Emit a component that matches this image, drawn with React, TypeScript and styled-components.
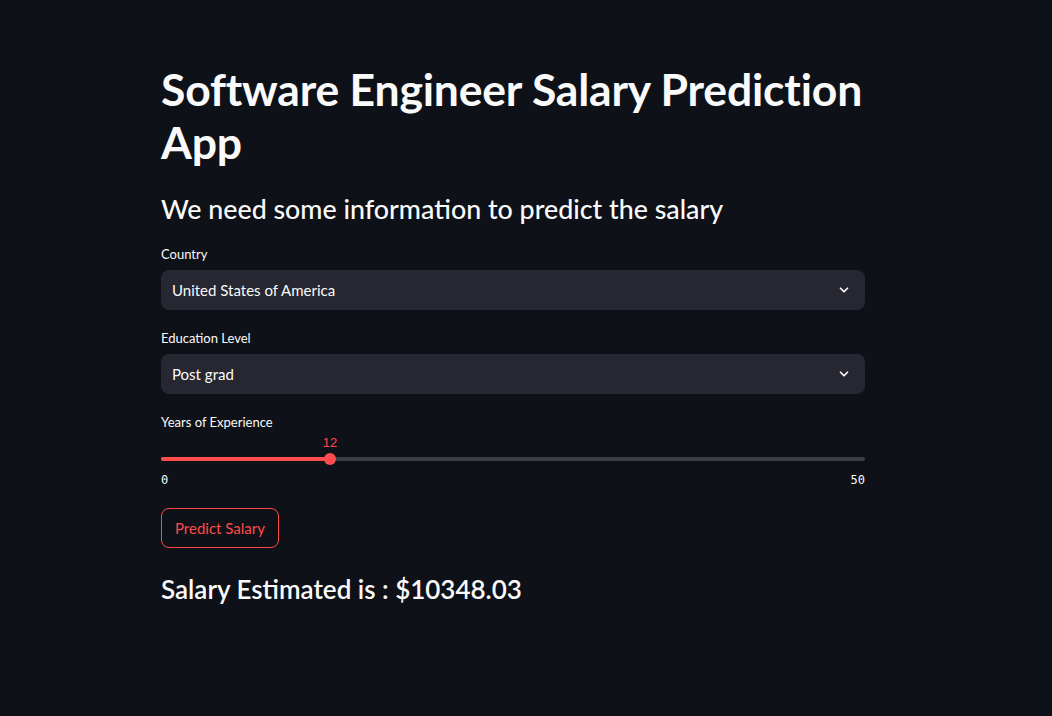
import React from "react";
import styled, { createGlobalStyle } from "styled-components";

const Global = createGlobalStyle`
  html, body { margin: 0; padding: 0; background: #0e1117; }
  body { font-family: "Lato", "Noto Sans", sans-serif; color: #fafafa; }
  * { box-sizing: border-box; }
`;

const Page = styled.div`
  min-height: 716px;
  background: #0e1117;
  padding: 62px 187px 40px 161px;
`;

const Column = styled.div`
  width: 704px;
  display: flex;
  flex-direction: column;
`;

const Title = styled.h1`
  margin: 0;
  font-size: 44.5px;
  line-height: 53px;
  font-weight: 700;
  letter-spacing: -0.2px;
  color: #fafafa;
`;

const Subheader = styled.h3`
  margin: 24px 0 0;
  font-size: 26.8px;
  line-height: 34px;
  font-weight: 500;
  color: #fafafa;
`;

const Field = styled.div<{ $top: number }>`
  margin-top: ${(p) => p.$top}px;
  display: flex;
  flex-direction: column;
`;

const Label = styled.label`
  font-size: 13px;
  line-height: 18px;
  color: #fafafa;
  margin-bottom: 7px;
`;

const SelectBox = styled.div`
  height: 40px;
  background: #262730;
  border-radius: 8px;
  display: flex;
  align-items: center;
  justify-content: space-between;
  padding: 0 14px 0 11px;
  font-size: 15px;
  color: #fafafa;
`;

const SliderWrap = styled.div`
  position: relative;
  height: 52px;
`;

const Track = styled.div`
  position: absolute;
  left: 0;
  right: 0;
  top: 19px;
  height: 4px;
  border-radius: 2px;
  background: #3b3d45;
`;

const Fill = styled.div`
  position: absolute;
  left: 0;
  top: 0;
  height: 4px;
  border-radius: 2px;
  background: #ff4b4b;
`;

const Thumb = styled.div`
  position: absolute;
  top: -4px;
  width: 12px;
  height: 12px;
  margin-left: -6px;
  border-radius: 50%;
  background: #ff4b4b;
`;

const ThumbValue = styled.div`
  position: absolute;
  top: -22px;
  transform: translateX(-50%);
  font-family: "Liberation Sans", sans-serif;
  font-size: 13px;
  color: #ff4b4b;
`;

const Ticks = styled.div`
  position: absolute;
  left: 0;
  right: 0;
  top: 35px;
  display: flex;
  justify-content: space-between;
  font-family: "DejaVu Sans Mono", monospace;
  font-size: 12px;
  color: #fafafa;
`;

const Button = styled.button`
  margin-top: 18px;
  align-self: flex-start;
  height: 40px;
  padding: 0 13px;
  background: transparent;
  border: 1px solid #ff4b4b;
  border-radius: 8px;
  color: #ff4b4b;
  font-family: inherit;
  font-size: 15px;
`;

const Result = styled.h3`
  margin: 24px 0 0;
  font-size: 26px;
  line-height: 34px;
  font-weight: 600;
  color: #fafafa;
`;

const Chevron = () => (
  <svg width="14" height="14" viewBox="0 0 24 24" fill="none" stroke="#fafafa" strokeWidth="3" strokeLinecap="round" strokeLinejoin="round">
    <path d="M6 9l6 6 6-6" />
  </svg>
);

export default function App() {
  const value = 12;
  const pct = (value / 50) * 100;
  return (
    <>
      <Global />
      <Page>
        <Column>
          <Title>Software Engineer Salary Prediction App</Title>
          <Subheader>We need some information to predict the salary</Subheader>
          <Field $top={19}>
            <Label>Country</Label>
            <SelectBox>
              <span>United States of America</span>
              <Chevron />
            </SelectBox>
          </Field>
          <Field $top={19}>
            <Label>Education Level</Label>
            <SelectBox>
              <span>Post grad</span>
              <Chevron />
            </SelectBox>
          </Field>
          <Field $top={19}>
            <Label>Years of Experience</Label>
            <SliderWrap>
              <Track>
                <Fill style={{ width: `${pct}%` }} />
                <Thumb style={{ left: `${pct}%` }} />
                <ThumbValue style={{ left: `${pct}%` }}>12</ThumbValue>
              </Track>
              <Ticks>
                <span>0</span>
                <span>50</span>
              </Ticks>
            </SliderWrap>
          </Field>
          <Button>Predict Salary</Button>
          <Result>Salary Estimated is : $10348.03</Result>
        </Column>
      </Page>
    </>
  );
}
